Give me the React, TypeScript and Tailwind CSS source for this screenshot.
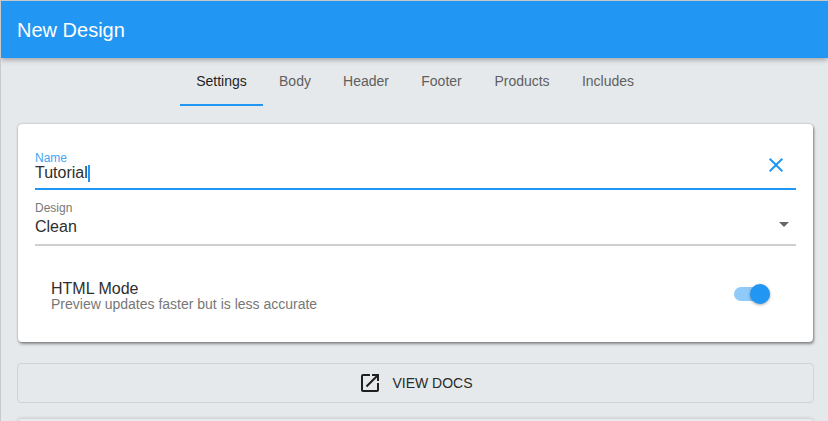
import React from 'react';
import { MdClose, MdOpenInNew } from 'react-icons/md';

const tabs = [
  { label: 'Settings', width: 'w-[83px]', active: true },
  { label: 'Body', width: 'w-[64px]' },
  { label: 'Header', width: 'w-[78px]' },
  { label: 'Footer', width: 'w-[73px]' },
  { label: 'Products', width: 'w-[88px]' },
  { label: 'Includes', width: 'w-[84px]' },
];

const App = () => {
  return (
    <div className="h-[421px] w-[828px] overflow-hidden bg-[#e6e9ec] border-t border-l border-[#c9c9c9] font-['Liberation_Sans',Arial,sans-serif]">
      {/* Header */}
      <header className="relative z-10 flex h-[57px] items-center bg-[#2196f3] pl-4 pt-px text-xl text-white shadow-[0_2px_5px_rgba(0,0,0,0.3)]">
        New Design
      </header>

      {/* Tabs */}
      <nav className="flex h-12 justify-center pl-px">
        {tabs.map((tab) => (
          <div
            key={tab.label}
            className={`flex items-center justify-center text-sm ${tab.width} ${
              tab.active ? 'border-b-2 border-[#2196f3] text-[#1f1f1f]' : 'pb-[2px] text-[#5f5f5f]'
            }`}
          >
            {tab.label}
          </div>
        ))}
      </nav>

      <main className="flex flex-col pl-[16px] pr-[14px] pt-[18px]">
        {/* Settings card */}
        <section className="mx-px h-[218px] rounded bg-white px-[17px] pt-[27px] shadow-[0_0_2px_rgba(0,0,0,0.3),1px_2px_3px_rgba(0,0,0,0.4)]">
          <div className="relative h-[39px] border-b-2 border-[#2196f3]">
            <div className="pt-px text-xs leading-[12px] text-[#42a5f5]">Name</div>
            <div className="mt-[-1px] flex h-[20px] items-center text-base leading-5 text-[#2e2e2e]">
              Tutorial
              <span className="h-[17px] w-[2px] bg-[#2196f3]"></span>
            </div>
            <MdClose className="absolute right-[8px] top-[2px] text-[#2196f3]" size={24} />
          </div>

          <div className="relative mt-[12px] h-[44px] border-b-2 border-[#cfcfcf]">
            <div className="text-xs leading-[13px] text-[#777777]">Design</div>
            <div className="mt-[2px] text-base leading-5 text-[#2e2e2e]">Clean</div>
            <span className="absolute right-[7px] top-[20px] h-0 w-0 border-x-[5px] border-t-[5px] border-x-transparent border-t-[#666666]"></span>
          </div>

          <div className="flex items-center justify-between pl-4 pr-[26px] pt-[33px]">
            <div>
              <div className="text-base leading-[20px] text-[#2e2e2e]">HTML Mode</div>
              <div className="mt-[-2px] text-sm leading-[14px] text-[#777777]">Preview updates faster but is less accurate</div>
            </div>
            <div className="relative mt-[-3px] h-[14px] w-[36px] rounded-full bg-[#90caf9]">
              <span className="absolute right-0 top-[-3px] h-5 w-5 rounded-full bg-[#2196f3] shadow-[0_1px_3px_rgba(0,0,0,0.35)]"></span>
            </div>
          </div>
        </section>

        {/* Docs button */}
        <button className="mt-[21px] flex h-10 items-center justify-center gap-[10px] rounded border border-[#cfd2d6] text-sm text-[#2a2a2a]">
          <MdOpenInNew size={24} className="text-[#1f1f1f]" />
          VIEW DOCS
        </button>

        {/* Next card, cut off by the window */}
        <div className="mx-px mt-4 h-10 rounded bg-[#e9ebee] shadow-[0_0_4px_rgba(0,0,0,0.2)]"></div>
      </main>
    </div>
  );
};

export default App;
